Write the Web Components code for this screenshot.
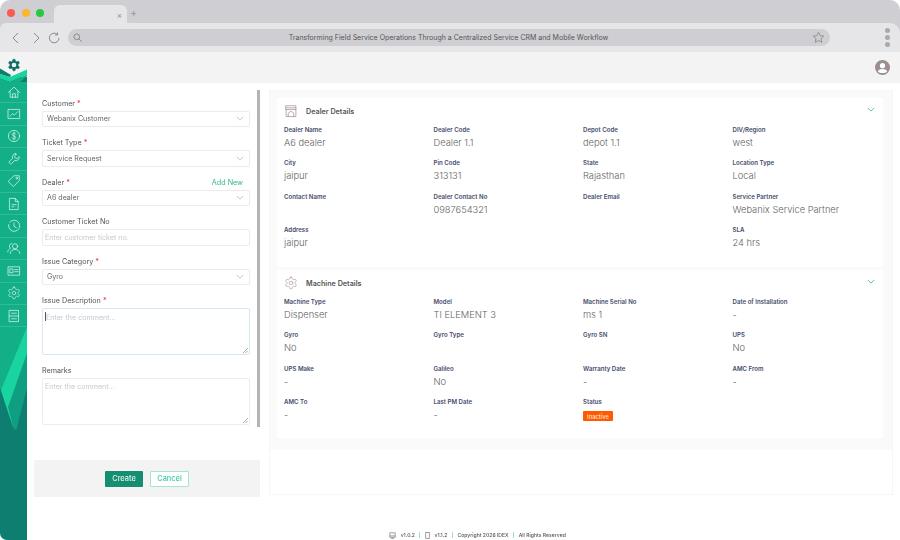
<!DOCTYPE html>
<html>
<head>
<meta charset="utf-8">
<title>Service ticket</title>
<style>
html,body{margin:0;height:100%;background:#fff;overflow:hidden}
body{font-family:"Inter","Liberation Sans",sans-serif;color:#555}
.page{width:900px;height:540px;display:flex;flex-direction:column;filter:blur(.3px)}
.app{flex:1;display:flex;min-height:0}
.main{flex:1;display:flex;flex-direction:column;min-width:0}
.content{flex:1;display:flex;gap:9px;padding:7px 7px 0 7px;align-items:flex-start}
</style>
</head>
<body>
<div class="page">
  <browser-chrome title-text="Transforming Field Service Operations Through a Centralized Service CRM and Mobile Workflow"></browser-chrome>
  <div class="app">
    <app-sidebar></app-sidebar>
    <div class="main">
      <app-topbar></app-topbar>
      <div class="content">
        <ticket-form></ticket-form>
        <details-panel>
          <detail-card heading="Dealer Details" icon="store" style="height:169px">
            <detail-item label="Dealer Name">A6 dealer</detail-item>
            <detail-item label="Dealer Code">Dealer 1.1</detail-item>
            <detail-item label="Depot Code">depot 1.1</detail-item>
            <detail-item label="DIV/Region">west</detail-item>
            <detail-item label="City">jaipur</detail-item>
            <detail-item label="Pin Code">313131</detail-item>
            <detail-item label="State">Rajasthan</detail-item>
            <detail-item label="Location Type">Local</detail-item>
            <detail-item label="Contact Name"></detail-item>
            <detail-item label="Dealer Contact No">0987654321</detail-item>
            <detail-item label="Dealer Email"></detail-item>
            <detail-item label="Service Partner">Webanix Service Partner</detail-item>
            <detail-item label="Address">jaipur</detail-item>
            <detail-item></detail-item>
            <detail-item></detail-item>
            <detail-item label="SLA">24 hrs</detail-item>
          </detail-card>
          <detail-card heading="Machine Details" icon="gear" style="height:168px">
            <detail-item label="Machine Type">Dispenser</detail-item>
            <detail-item label="Model">TI ELEMENT 3</detail-item>
            <detail-item label="Machine Serial No">ms 1</detail-item>
            <detail-item label="Date of Installation">-</detail-item>
            <detail-item label="Gyro">No</detail-item>
            <detail-item label="Gyro Type"></detail-item>
            <detail-item label="Gyro SN"></detail-item>
            <detail-item label="UPS">No</detail-item>
            <detail-item label="UPS Make">-</detail-item>
            <detail-item label="Galileo">No</detail-item>
            <detail-item label="Warranty Date">-</detail-item>
            <detail-item label="AMC From">-</detail-item>
            <detail-item label="AMC To">-</detail-item>
            <detail-item label="Last PM Date">-</detail-item>
            <detail-item label="Status"><status-badge>Inactive</status-badge></detail-item>
          </detail-card>
        </details-panel>
      </div>
      <app-footer></app-footer>
    </div>
  </div>
</div>

<script>
const GEAR = 'M12.22 2h-.44a2 2 0 0 0-2 2v.18a2 2 0 0 1-1 1.73l-.43.25a2 2 0 0 1-2 0l-.15-.08a2 2 0 0 0-2.73.73l-.22.38a2 2 0 0 0 .73 2.73l.15.1a2 2 0 0 1 1 1.72v.51a2 2 0 0 1-1 1.74l-.15.09a2 2 0 0 0-.73 2.73l.22.38a2 2 0 0 0 2.73.73l.15-.08a2 2 0 0 1 2 0l.43.25a2 2 0 0 1 1 1.73V20a2 2 0 0 0 2 2h.44a2 2 0 0 0 2-2v-.18a2 2 0 0 1 1-1.73l.43-.25a2 2 0 0 1 2 0l.15.08a2 2 0 0 0 2.73-.73l.22-.39a2 2 0 0 0-.73-2.73l-.15-.08a2 2 0 0 1-1-1.74v-.5a2 2 0 0 1 1-1.74l.15-.09a2 2 0 0 0 .73-2.73l-.22-.38a2 2 0 0 0-2.73-.73l-.15.08a2 2 0 0 1-2 0l-.43-.25a2 2 0 0 1-1-1.73V4a2 2 0 0 0-2-2z'

const ICONS = {
  home: '<path d="M2 10.5 10 3l8 7.5M4.5 9v8.5h11V9M8 17.5v-5h4v5"/>',
  chart: '<rect x="2" y="3.5" width="16" height="13"/><path d="M4.5 13 8 9.5l2.5 2 5-5"/>',
  dollar: '<circle cx="10" cy="10" r="8"/><path d="M12.5 7.3c-.5-1-1.4-1.4-2.5-1.4-1.3 0-2.5.7-2.5 2 0 2.8 5 1.4 5 4.2 0 1.3-1.2 2-2.5 2-1.2 0-2.2-.5-2.7-1.5M10 4.5v11"/>',
  wrench: '<path d="M12 2.5a4.5 4.5 0 0 0-4 6.3L2.5 14.500l3 3 5.700-5.500a4.500 4.500 0 0 0 6-5.500l-3 3-2.500-1-1-2.500 3-3a5 5 0 0 0-1.700-.5z"/>',
  tag: '<path d="M10.5 2.5h7v7L9 18l-7-7z"/><circle cx="14" cy="6" r="1.2"/>',
  doc: '<path d="M4 2h8l4 4.500V18H4z"/><path d="M12 2v4.500h4M7 11h6M7 14h3"/>',
  clock: '<path d="M4 4.500A8 8 0 1 1 2.300 8"/><path d="M10 5.500v5l3.500 2"/>',
  people: '<circle cx="11.500" cy="7.500" r="3.700"/><path d="M4.500 18c.5-4 3.500-6 7-6s6.500 2 7 6M6.500 3.500A4 4 0 0 0 5 10.500c-2 1-3.500 2.500-4 5"/>',
  card: '<rect x="2" y="4" width="16" height="12"/><rect x="4.500" y="7" width="4" height="5.500"/><path d="M11 8h5M11 11h5"/>',
  gear: `<g transform="scale(.833)"><path d="${GEAR}"/><circle cx="12" cy="12" r="3"/></g>`,
  list: '<rect x="3.500" y="2" width="13" height="16"/><path d="M3.500 10h13M6.500 6h7M6.500 14h7"/>',
  store: '<path d="M3 2.500h14V8H3zM3 8v10h14V8M3 5.500h14M6 18v-5l4-2.500 4 2.500v5"/>'
}
const icon = (name, size, color, width) =>
  `<svg viewBox="0 0 20 20" width="${size}" height="${size}" fill="none" stroke="${color}" stroke-width="${width}" stroke-linecap="round" stroke-linejoin="round">${ICONS[name]}</svg>`

const chevron = (color) =>
  `<svg viewBox="0 0 10 6" width="8" height="5" fill="none" stroke="${color}" stroke-width="1"><path d="M1 1l4 4 4-4"/></svg>`

class BrowserChrome extends HTMLElement {
  constructor() {
    super()
    const root = this.attachShadow({mode: "open"})
    root.innerHTML = `
    <style>
      :host{display:block;height:52px;background:#fff;font-family:"Inter",sans-serif}
      .frame{height:52px;background:#cfced3;border-radius:10px 10px 0 0;display:flex;flex-direction:column;overflow:hidden}
      .tabs{height:23px;display:flex;align-items:flex-start;padding-left:7px;box-sizing:border-box}
      .dot{width:8px;height:8px;border-radius:50%;margin-top:9px;margin-right:6.5px}
      .tab{width:73px;height:19px;margin:5px 0 0 3.5px;background:#e6e6e8;border-radius:6px 6px 0 0;display:flex;justify-content:flex-end;align-items:center;padding-right:5px;box-sizing:border-box;font-size:8px;color:#888}
      .plus{font-size:11px;color:#9a9a9e;margin:7px 0 0 3px;line-height:12px}
      .bar{flex:1;background:#e6e6e8;border-radius:6px 10px 0 0;display:flex;align-items:center;padding:0 8px 0 11px}
      .nav{display:flex;align-items:center;width:57px;flex:none}
      .url{width:762px;height:17px;background:#cfced3;border-radius:9px;display:flex;align-items:center;padding:0 5px;box-sizing:border-box;flex:none}
      .url span{font-size:7px;color:#555;flex:1;text-align:center;white-space:nowrap;padding-left:3px}
      .more{margin-left:auto;display:flex;flex-direction:column;gap:1.5px;margin-right:2px}
      .more i{display:block;width:5.5px;height:5.5px;border-radius:50%;background:#a9a9ac}
    </style>
    <div class="frame">
      <div class="tabs">
        <div class="dot" style="background:#fb5a52"></div>
        <div class="dot" style="background:#fcb62e"></div>
        <div class="dot" style="background:#28c840"></div>
        <div class="tab">×</div>
        <div class="plus">+</div>
      </div>
      <div class="bar">
        <div class="nav">
          <svg width="9" height="12" viewBox="0 0 9 12" fill="none" stroke="#8a8a8e" stroke-width="1"><path d="M7 1 2 6l5 5"/></svg>
          <svg width="9" height="12" viewBox="0 0 9 12" fill="none" stroke="#8a8a8e" stroke-width="1" style="margin-left:12px"><path d="M2 1l5 5-5 5"/></svg>
          <svg width="12" height="12" viewBox="0 0 12 12" fill="none" stroke="#8a8a8e" stroke-width="1" style="margin-left:7px"><path d="M9.5 2.5A4.800 4.800 0 1 0 11 6M9.500.5V3H7"/></svg>
        </div>
        <div class="url">
          <svg width="9" height="9" viewBox="0 0 10 10" fill="none" stroke="#8a8a8e" stroke-width="1.1"><circle cx="4.2" cy="4.2" r="3.2"/><path d="M6.5 6.5l3 3"/></svg>
          <span>${this.getAttribute("title-text")}</span>
          <svg width="13" height="13" viewBox="0 0 14 14" fill="none" stroke="#8f8f93" stroke-width="1"><path d="M7 1.300 8.700 5l4 .5-3 2.700.8 4L7 10.200l-3.500 2 .8-4-3-2.700 4-.5z"/></svg>
        </div>
        <div class="more"><i></i><i></i><i></i></div>
      </div>
    </div>`
  }
}

class AppSidebar extends HTMLElement {
  constructor() {
    super()
    const root = this.attachShadow({mode: "open"})
    const names = ["home","chart","dollar","wrench","tag","doc","clock","people","card","gear","list"]
    const items = names.map(n => `<div class="item">${icon(n, 14, "#e6fbf4", 1)}</div>`).join("")
    root.innerHTML = `
    <style>
      :host{display:block;width:27px;height:488px;position:relative;flex:none;background:#f3f3f3;border-radius:0 0 0 7px;overflow:hidden}
      .art{position:absolute;left:0;top:0;width:27px;height:488px}
      .logo{height:30px;display:flex;justify-content:center;padding-top:6px;box-sizing:border-box;position:relative}
      .nav{position:relative;margin-top:-1px}
      .item{height:22.4px;box-sizing:border-box;display:flex;align-items:center;justify-content:center;border-bottom:1px solid rgba(255,255,255,.14)}
    </style>
    <svg class="art" viewBox="0 0 27 488">
      <rect x="0" y="25" width="27" height="463" fill="#0e7e70"/>
      <path d="M0 30H27V335L16 378 13 375 0 336Z" fill="#13af87"/>
      <path d="M0 22 10 25 27 17.500V22.500L10 30 0 26.500Z" fill="#19d49f"/>
      <path d="M0 16.500 11 23 10 25 0 22Z" fill="#0e7e70"/>
      <path d="M0 26.500 10 30H0Z" fill="#13af87"/>
      <path d="M10 30 27 22.500V24L20 30Z" fill="#13af87"/>
      <path d="M27 25V30H20Z" fill="#0e7e70"/>
      <path d="M8 355 27 301V335L16 378 13 375Z" fill="#109e83"/>
      <path d="M27 275V301L8 355 13 375 1 338Z" fill="#19d49f"/>
    </svg>
    <div class="logo">
      <svg viewBox="0 0 24 24" width="14" height="14" fill="#0e6f66" stroke="#0e6f66" stroke-width="1"><path d="${GEAR}"/><circle cx="12" cy="12" r="4" fill="#f3f3f3" stroke="none"/></svg>
    </div>
    <div class="nav">${items}</div>`
  }
}

class AppTopbar extends HTMLElement {
  constructor() {
    super()
    this.attachShadow({mode: "open"}).innerHTML = `
    <style>
      :host{display:flex;height:31px;background:#f3f3f3;align-items:center;justify-content:flex-end;padding-right:10px;flex:none}
    </style>
    <svg width="15" height="15" viewBox="0 0 16 16">
      <circle cx="8" cy="8" r="8" fill="#9a8e8e"/>
      <circle cx="8" cy="6" r="2.800" fill="#fff"/>
      <path d="M3 12.200c.8-1.900 2.800-2.600 5-2.600s4.200.7 5 2.600c-1 1.100-3 1.600-5 1.600s-4-.5-5-1.600z" fill="#fff"/>
    </svg>`
  }
}

class FormField extends HTMLElement {
  constructor() {
    super()
    const root = this.attachShadow({mode: "open"})
    const required = this.hasAttribute("required") ? ' <b>*</b>' : ""
    const link = this.getAttribute("link")
    root.innerHTML = `
    <style>
      :host{display:block;margin-bottom:11px}
      .label{font-size:7.2px;line-height:10px;height:10px;margin-bottom:2px;color:#555;display:flex;justify-content:space-between;padding-right:7px;white-space:pre}
      b{color:#e44;font-weight:500}
      a{color:#2fb58f;font-size:7.200px}
    </style>
    <div class="label"><span>${this.getAttribute("label")}${required}</span>${link ? `<a>${link}</a>` : ""}</div>
    <slot></slot>`
  }
}

class SelectBox extends HTMLElement {
  constructor() {
    super()
    this.attachShadow({mode: "open"}).innerHTML = `
    <style>
      :host{display:flex;height:16.5px;box-sizing:border-box;border:1px solid #ececec;border-radius:2px;align-items:center;justify-content:space-between;padding:0 5px 0 4px;font-size:7.1px;color:#666;box-shadow:0 0 1px #f2f2f2}
    </style>
    <span><slot></slot></span>${chevron("#bbb")}`
  }
}

class TextBox extends HTMLElement {
  constructor() {
    super()
    const tall = this.hasAttribute("tall")
    const focused = this.hasAttribute("focused")
    this.attachShadow({mode: "open"}).innerHTML = `
    <style>
      :host{display:block;position:relative;height:${tall ? 47 : 16.5}px;box-sizing:border-box;border:1px solid ${focused ? "#d6e6f3" : "#ececec"};border-radius:2px;padding:3px 2px;font-size:7.1px;line-height:9px;color:#c9c9c9}
      .caret{display:inline-block;width:1px;height:9px;background:#555;vertical-align:-1px}
      svg{position:absolute;right:1px;bottom:1px}
    </style>
    ${focused ? '<span class="caret"></span>' : ""}<slot></slot>
    ${tall ? '<svg width="5" height="5" viewBox="0 0 5 5" stroke="#888" stroke-width=".7"><path d="M0 5 5 0M2.500 5 5 2.500"/></svg>' : ""}`
  }
}

class TicketForm extends HTMLElement {
  constructor() {
    super()
    const root = this.attachShadow({mode: "open"})
    root.innerHTML = `
    <style>
      :host{display:flex;flex-direction:column;width:226px;height:407px;position:relative;flex:none;font-family:"Inter",sans-serif}
      .body{flex:1;padding:8.5px 10px 0 8px}
      .foot{height:37px;background:#f3f3f3;display:flex;justify-content:center;align-items:center;gap:7px}
      button{height:16px;font:500 7.4px "Inter",sans-serif;border-radius:1px;padding:0;cursor:pointer}
      .primary{width:38px;background:#168e72;color:#dff3ec;border:none}
      .ghost{width:39px;background:#fff;color:#3fc9a5;border:1px solid #a5e3d2}
      .scroll{position:absolute;right:0;top:0;width:3px;height:337px;background:#b4b4b4}
    </style>
    <div class="body">
      <form-field label="Customer" required><select-box>Webanix Customer</select-box></form-field>
      <form-field label="Ticket Type" required><select-box>Service Request</select-box></form-field>
      <form-field label="Dealer" required link="Add New"><select-box>A6 dealer</select-box></form-field>
      <form-field label="Customer Ticket No"><text-box>Enter customer ticket no.</text-box></form-field>
      <form-field label="Issue Category" required><select-box>Gyro</select-box></form-field>
      <form-field label="Issue Description" required><text-box tall focused>Enter the comment...</text-box></form-field>
      <form-field label="Remarks"><text-box tall>Enter the comment...</text-box></form-field>
    </div>
    <div class="foot">
      <button class="primary">Create</button>
      <button class="ghost">Cancel</button>
    </div>
    <div class="scroll"></div>`
  }
}

class DetailsPanel extends HTMLElement {
  constructor() {
    super()
    this.attachShadow({mode: "open"}).innerHTML = `
    <style>
      :host{display:block;width:624px;height:405px;box-sizing:border-box;border:1px solid #f6f6f6;flex:none}
      .top{background:#fafafa;padding:7px 9px 0 7px;height:359px;box-sizing:border-box;display:flex;flex-direction:column;gap:3px}
    </style>
    <div class="top"><slot></slot></div>`
  }
}

class DetailCard extends HTMLElement {
  constructor() {
    super()
    this.attachShadow({mode: "open"}).innerHTML = `
    <style>
      :host{display:block;background:#fff;position:relative;box-sizing:border-box;padding:5px 7px 0 7px;font-family:"Inter",sans-serif}
      .head{display:flex;align-items:center;gap:8px;height:16px;margin-bottom:5.5px;font-size:7.2px;font-weight:600;color:#555}
      .grid{display:grid;grid-template-columns:repeat(4,149.5px);grid-auto-rows:33.5px}
      .toggle{position:absolute;right:8px;top:8px;line-height:0}
    </style>
    <div class="head">${icon(this.getAttribute("icon"), 14, "#a08a88", 1)}<span>${this.getAttribute("heading")}</span></div>
    <div class="toggle">${chevron("#2fb58f")}</div>
    <div class="grid"><slot></slot></div>`
  }
}

class DetailItem extends HTMLElement {
  constructor() {
    super()
    this.attachShadow({mode: "open"}).innerHTML = `
    <style>
      :host{display:block;min-width:0}
      .label{font-size:6.1px;font-weight:600;color:#454c6b;line-height:9px;height:9px;margin-bottom:2px;white-space:nowrap}
      .value{font-size:9.3px;font-weight:300;color:#5f5f5f;line-height:13px;white-space:nowrap}
    </style>
    <div class="label">${this.getAttribute("label") || ""}</div>
    <div class="value"><slot></slot></div>`
  }
}

class StatusBadge extends HTMLElement {
  constructor() {
    super()
    this.attachShadow({mode: "open"}).innerHTML = `
    <style>
      :host{display:inline-flex;align-items:center;justify-content:center;width:30px;height:10px;margin-top:3px;background:#ff5a00;color:#ffe2cf;font-size:5.8px;font-weight:500;border-radius:1px;vertical-align:top}
    </style>
    <slot></slot>`
  }
}

class AppFooter extends HTMLElement {
  constructor() {
    super()
    this.attachShadow({mode: "open"}).innerHTML = `
    <style>
      :host{display:flex;justify-content:center;align-items:center;height:10px;gap:4.5px;padding-left:28px;font-size:5.1px;color:#555;font-weight:500;white-space:nowrap;flex:none}
      i{width:1px;height:6px;background:#9fdccb;display:block}
      svg{display:block}
    </style>
    <svg width="7" height="7" viewBox="0 0 8 8" fill="none" stroke="#777" stroke-width=".8"><rect x="1" y="1" width="6" height="5"/><path d="M1 4.500h6M2.500 7.500h3"/></svg>
    <span>v1.0.2</span><i></i>
    <svg width="5" height="7" viewBox="0 0 5 8" fill="none" stroke="#777" stroke-width=".8"><rect x=".5" y=".5" width="4" height="7"/></svg>
    <span>v1.1.2</span><i></i>
    <span>Copyright 2026 IDEX</span><i></i>
    <span>All Rights Reserved</span>`
  }
}

customElements.define("browser-chrome", BrowserChrome)
customElements.define("app-sidebar", AppSidebar)
customElements.define("app-topbar", AppTopbar)
customElements.define("form-field", FormField)
customElements.define("select-box", SelectBox)
customElements.define("text-box", TextBox)
customElements.define("ticket-form", TicketForm)
customElements.define("details-panel", DetailsPanel)
customElements.define("detail-card", DetailCard)
customElements.define("detail-item", DetailItem)
customElements.define("status-badge", StatusBadge)
customElements.define("app-footer", AppFooter)
</script>
</body>
</html>
